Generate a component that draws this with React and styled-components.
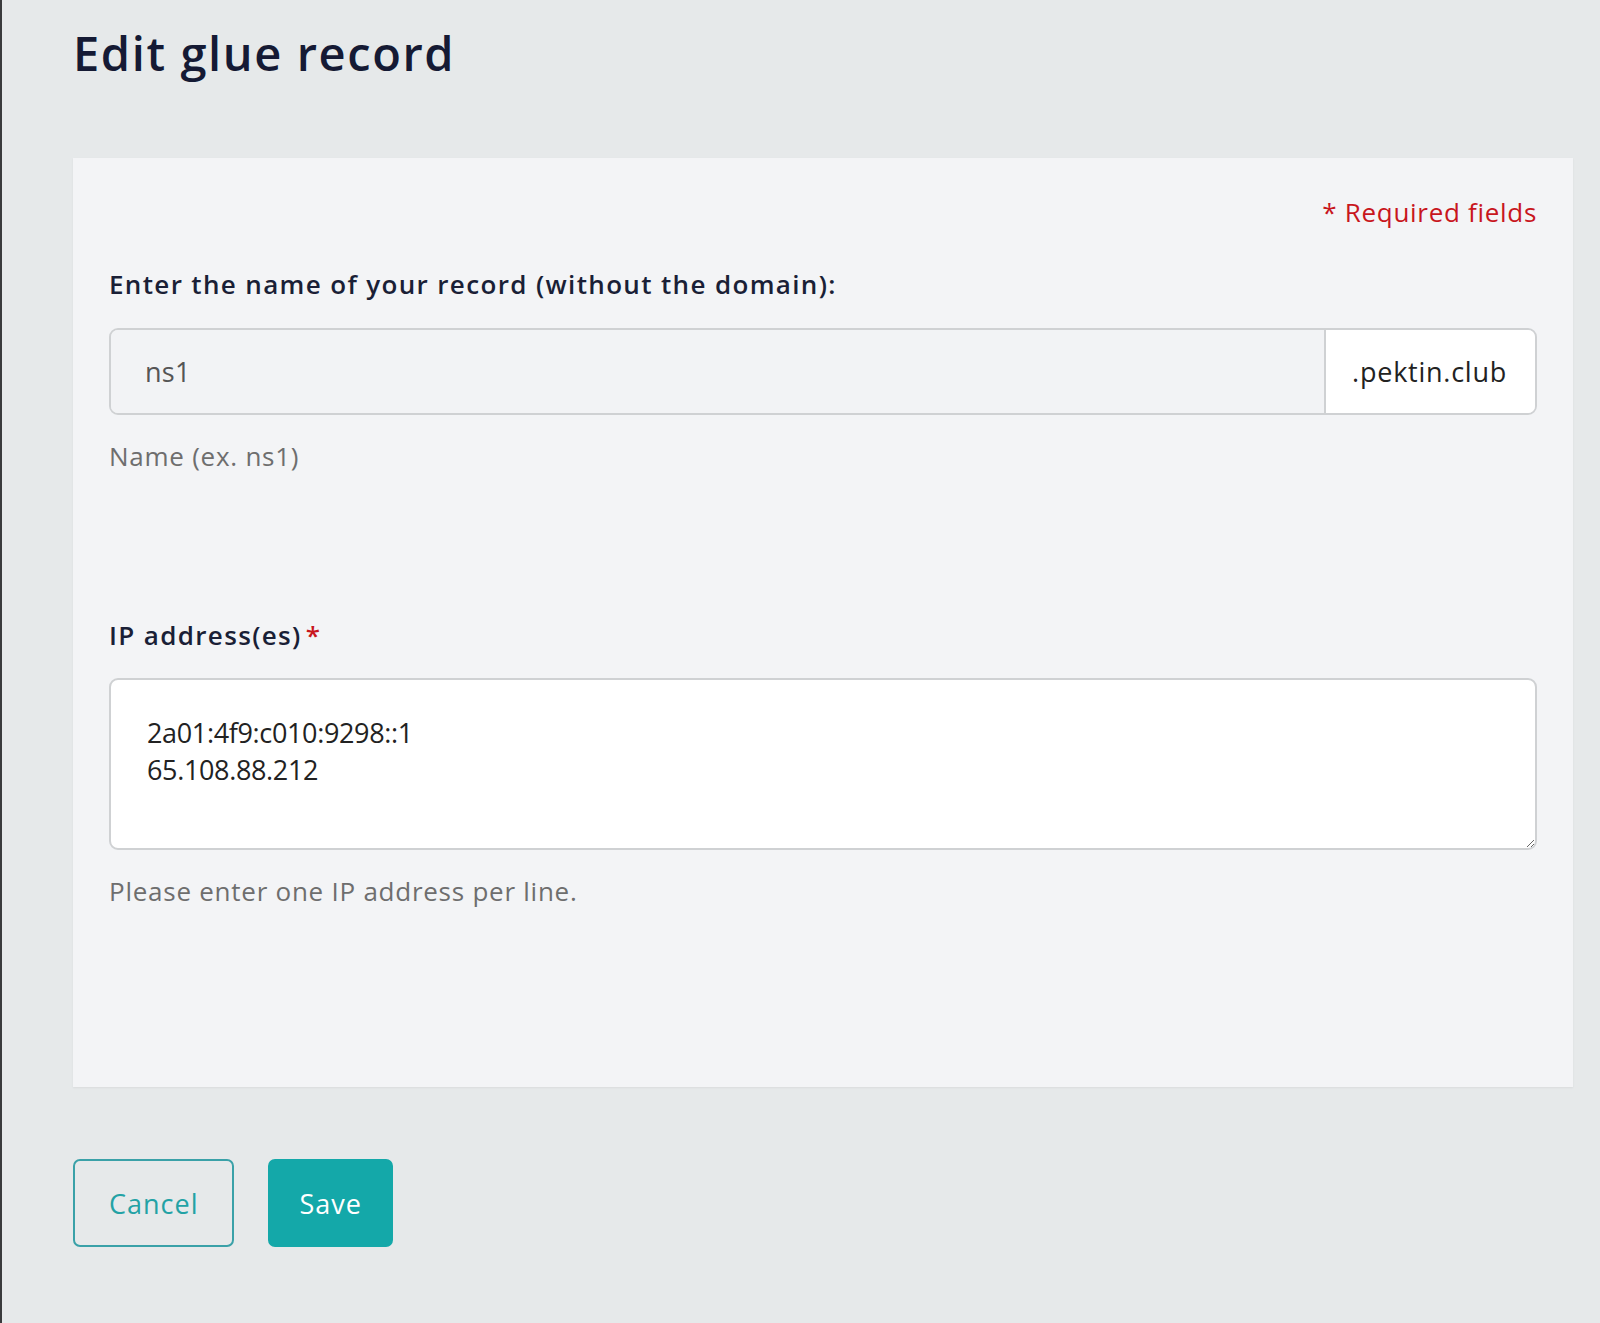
import React from 'react'
import styled, { createGlobalStyle } from 'styled-components'

const GlobalStyle = createGlobalStyle`
    html, body {
        margin: 0;
        padding: 0;
        background: #e6e9ea;
    }
    body {
        font-family: "Open Sans", "Liberation Sans", sans-serif;
        color: #1a1f36;
    }
    * {
        box-sizing: border-box;
    }
`

const Page = styled.div`
    min-height: 1323px;
    border-left: 2px solid #3a3b3d;
    padding: 25px 27px 0 71px;
`

const Title = styled.h1`
    margin: 0;
    font-size: 47px;
    line-height: 56px;
    font-weight: 600;
    letter-spacing: 1.6px;
    color: #151a34;
`

const Card = styled.div`
    margin-top: 77px;
    background: #f3f4f6;
    padding: 36px 36px 178px;
    box-shadow: 0 1px 2px rgba(0, 0, 0, 0.06);
`

const RequiredNote = styled.div`
    text-align: right;
    font-size: 26px;
    line-height: 36px;
    letter-spacing: 0.7px;
    color: #c8161d;
`

const Label = styled.div`
    margin-top: ${({ spaced }) => (spaced ? '143px' : '36px')};
    font-size: 26px;
    line-height: 36px;
    font-weight: 600;
    letter-spacing: 1.35px;
    color: #1a1f36;
`

const Star = styled.span`
    color: #c8161d;
    margin-left: 4px;
`

const InputGroup = styled.div`
    margin-top: 26px;
    display: flex;
    height: 87px;
    border: 2px solid #cfd1d3;
    border-radius: 9px;
    overflow: hidden;
`

const NameInput = styled.input`
    flex: 1;
    min-width: 0;
    border: 0;
    outline: 0;
    background: #f2f3f5;
    padding: 0 34px;
    font: inherit;
    font-size: 27px;
    letter-spacing: 0.3px;
    color: #555;
`

const Suffix = styled.div`
    display: flex;
    align-items: center;
    padding: 0 28px 0 26px;
    background: #fff;
    border-left: 2px solid #cfd1d3;
    font-size: 27px;
    letter-spacing: 0.75px;
    color: #222;
`

const Help = styled.div`
    margin-top: 23px;
    font-size: 26px;
    line-height: 36px;
    letter-spacing: 0.75px;
    color: #6e6e6e;
`

const IpArea = styled.textarea`
    display: block;
    margin-top: 25px;
    width: 100%;
    height: 172px;
    border: 2px solid #cfd1d3;
    border-radius: 9px;
    background: #fff;
    padding: 34px 36px;
    font: inherit;
    font-size: 27px;
    line-height: 37px;
    letter-spacing: -0.35px;
    color: #222;
    outline: 0;
`

const Actions = styled.div`
    margin-top: 72px;
    display: flex;
    gap: 34px;
`

const Button = styled.button`
    height: 88px;
    padding: 0 ${({ primary }) => (primary ? '29px' : '34px')};
    border-radius: 7px;
    border: 2px solid ${({ primary }) => (primary ? '#14a8a9' : '#3aa1a8')};
    background: ${({ primary }) => (primary ? '#14a8a9' : 'transparent')};
    color: ${({ primary }) => (primary ? '#fff' : '#23a2a5')};
    font: inherit;
    font-size: 27px;
    letter-spacing: 1px;
    cursor: pointer;
`

export default function App() {
    return (
        <>
            <GlobalStyle />
            <Page>
                <Title>Edit glue record</Title>
                <Card>
                    <RequiredNote>* Required fields</RequiredNote>
                    <Label>Enter the name of your record (without the domain):</Label>
                    <InputGroup>
                        <NameInput defaultValue="ns1" />
                        <Suffix>.pektin.club</Suffix>
                    </InputGroup>
                    <Help>Name (ex. ns1)</Help>
                    <Label spaced>
                        IP address(es)<Star>*</Star>
                    </Label>
                    <IpArea defaultValue={'2a01:4f9:c010:9298::1\n65.108.88.212'} />
                    <Help>Please enter one IP address per line.</Help>
                </Card>
                <Actions>
                    <Button>Cancel</Button>
                    <Button primary>Save</Button>
                </Actions>
            </Page>
        </>
    )
}
